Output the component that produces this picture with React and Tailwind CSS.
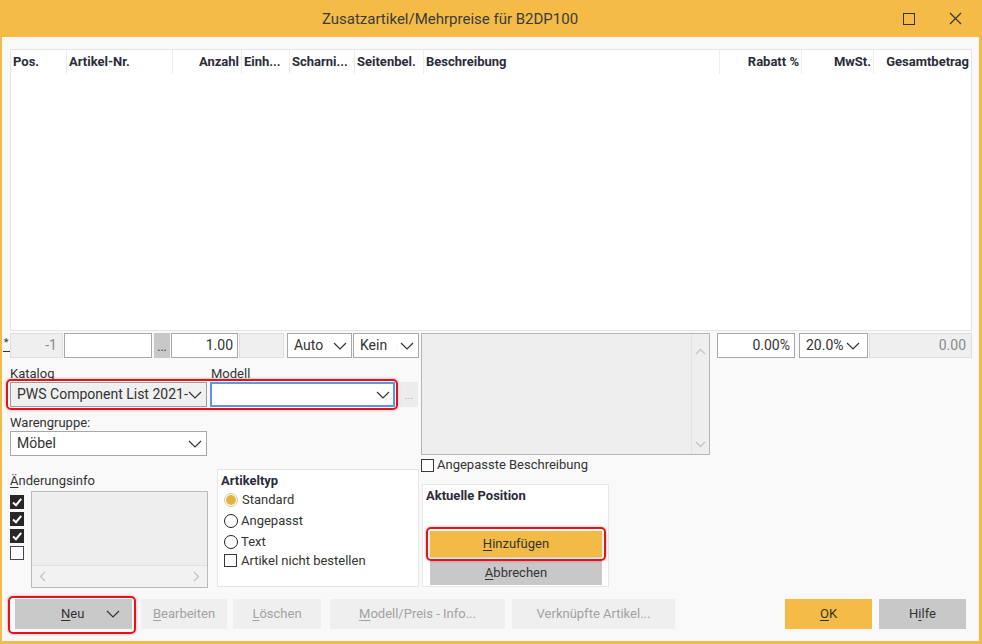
import React from "react";

const Chevron = ({ color = "#333" }) => (
  <svg width="14" height="8" viewBox="0 0 14 8" className="shrink-0">
    <path d="M1 1 L7 7 L13 1" stroke={color} strokeWidth="1.2" fill="none" />
  </svg>
);

const U = ({ children }) => <span className="underline underline-offset-2">{children}</span>;

const cols = [
  { t: "Pos.", w: 56 },
  { t: "Artikel-Nr.", w: 106 },
  { t: "Anzahl", w: 69, r: true },
  { t: "Einh...", w: 48 },
  { t: "Scharni...", w: 65 },
  { t: "Seitenbel.", w: 69 },
  { t: "Beschreibung", w: 296 },
  { t: "Rabatt %", w: 82, r: true },
  { t: "MwSt.", w: 72, r: true },
  { t: "Gesamtbetrag", w: 97, r: true, last: true },
];

function Select({ w, text, bg = "bg-white", border = "border-[#a8a8a8]" }) {
  return (
    <div
      className={`h-[25px] ${bg} border ${border} flex items-center justify-between pl-[6px] pr-[4px] text-[14px] text-[#333] overflow-hidden shrink-0`}
      style={{ width: w }}
    >
      <span className="whitespace-nowrap overflow-hidden">{text}</span>
      <Chevron />
    </div>
  );
}

function DarkCheck() {
  return (
    <div className="w-[14px] h-[14px] bg-[#272727] flex items-center justify-center">
      <svg width="12" height="12" viewBox="0 0 12 12">
        <path d="M2 6.5 L5 9.2 L10.2 2.8" stroke="white" strokeWidth="2" fill="none" />
      </svg>
    </div>
  );
}

export default function App() {
  return (
    <div className="w-[982px] h-[644px] bg-[#f4bc47] flex flex-col font-['Roboto',sans-serif] text-[13px] text-[#333] overflow-hidden">
      {/* Title bar */}
      <div className="h-[37px] flex items-center shrink-0">
        <div className="w-[900px] text-center text-[15px] text-[#3b3b3b] pt-[1px]">
          Zusatzartikel/Mehrpreise für B2DP100
        </div>
        <div className="flex items-center pl-[3px]">
          <div className="w-[12px] h-[12px] border border-[#333]" />
          <svg width="13" height="13" viewBox="0 0 13 13" className="ml-[34px]">
            <path d="M1 1 L12 12 M12 1 L1 12" stroke="#333" strokeWidth="1.1" />
          </svg>
        </div>
      </div>

      {/* Body */}
      <div className="flex-1 ml-[2px] mr-[3px] mb-[3px] bg-[#f9f9f9] pt-[12px] flex flex-col">
        {/* Table */}
        <div className="ml-[8px] w-[962px] h-[282px] bg-white border border-[#e4e4e4]">
          <div className="flex h-[24px]">
            {cols.map((c) => (
              <div
                key={c.t}
                className={`h-full flex items-center px-[2px] font-bold text-[13px] text-[#2c2c3a] whitespace-nowrap overflow-hidden ${c.r ? "justify-end" : ""} ${c.last ? "" : "border-r border-[#ececec]"}`}
                style={{ width: c.w }}
              >
                {c.t}
              </div>
            ))}
          </div>
        </div>

        {/* Upper form area */}
        <div className="flex mt-[2px]">
          {/* Left column */}
          <div className="w-[417px] flex flex-col shrink-0">
            {/* input row */}
            <div className="flex h-[25px] items-start">
              <div className="w-[8px] h-[25px] flex flex-col items-center pt-[4px]">
                <span className="text-[11px] leading-[11px] text-[#333]">*</span>
                <div className="w-[7px] border-b border-[#333] mt-[3px]" />
              </div>
              <div className="w-[53px] h-[25px] bg-[#efefef] border border-[#dedede] flex items-center justify-end pr-[5px] text-[14px] text-[#8a8a8a]">-1</div>
              <div className="ml-[1px] w-[88px] h-[25px] bg-white border border-[#a8a8a8]" />
              <div className="ml-[2px] w-[16px] h-[25px] bg-[#c8c8c8] flex items-end justify-center pb-[5px] text-[12px] leading-none text-[#333]">...</div>
              <div className="ml-[1px] w-[67px] h-[25px] bg-white border border-[#a8a8a8] flex items-center justify-end pr-[4px] text-[14px]">1.00</div>
              <div className="ml-[1px] w-[45px] h-[25px] bg-[#efefef] border border-[#dedede]" />
              <div className="ml-[3px]"><Select w={65} text="Auto" /></div>
              <div className="ml-[1px]"><Select w={66} text="Kein" /></div>
            </div>

            {/* Katalog / Modell */}
            <div className="flex mt-[8px] pl-[8px] h-[16px] items-center text-[13px]">
              <span className="w-[201px]">Katalog</span>
              <span>Modell</span>
            </div>
            <div className="flex pl-[8px] mt-[0px] items-center">
              <div className="relative flex">
                <div className="absolute -left-[4px] -top-[3px] -right-[3px] -bottom-[3px] border-2 border-[#e3131d] rounded-[5px] shadow-[0_0_3px_rgba(227,19,29,0.45)] pointer-events-none" />
                <Select w={197} text="PWS Component List 2021-2" bg="bg-[#f0f0f0]" border="border-[#9c9c9c]" />
                <div className="ml-[3px] w-[185px] h-[25px] bg-white border-2 border-[#5f96e3] flex items-center justify-end pr-[3px]">
                  <Chevron />
                </div>
              </div>
              <div className="ml-[5px] w-[18px] h-[25px] bg-[#ececec] flex items-end justify-center pb-[6px] text-[11px] leading-none text-[#b0b0b0]">...</div>
            </div>

            {/* Warengruppe */}
            <div className="mt-[8px] pl-[8px] h-[16px] flex items-center">Warengruppe:</div>
            <div className="pl-[8px]">
              <Select w={197} text="Möbel" />
            </div>

            {/* groups row */}
            <div className="flex mt-[13px] pl-[8px]">
              {/* Änderungsinfo */}
              <div className="w-[198px] flex flex-col">
                <div className="h-[16px] mt-[4px] flex items-center"><U>Ä</U>nderungsinfo</div>
                <div className="flex mt-[2px]">
                  <div className="flex flex-col gap-[3px] pt-[4px]">
                    <DarkCheck />
                    <DarkCheck />
                    <DarkCheck />
                    <div className="w-[14px] h-[14px] bg-white border border-[#4a3f55]" />
                  </div>
                  <div className="ml-[7px] w-[177px] h-[97px] bg-[#eeeeee] border border-[#b9b9b9] flex flex-col">
                    <div className="flex-1" />
                    <div className="h-[22px] bg-[#f2f2f2] border-t border-[#e2e2e2] flex items-center justify-between px-[7px]">
                      <svg width="7" height="11" viewBox="0 0 7 11"><path d="M6 1 L1.5 5.5 L6 10" stroke="#c4c4c4" strokeWidth="1.3" fill="none" /></svg>
                      <svg width="7" height="11" viewBox="0 0 7 11"><path d="M1 1 L5.5 5.5 L1 10" stroke="#c4c4c4" strokeWidth="1.3" fill="none" /></svg>
                    </div>
                  </div>
                </div>
              </div>
              {/* Artikeltyp */}
              <div className="ml-[9px] w-[202px] h-[118px] bg-white border border-[#e6e6e6] flex flex-col">
                <div className="h-[16px] mt-[3px] pl-[3px] flex items-center font-bold text-[#2c2c3a]">Artikeltyp</div>
                <div className="h-[21px] flex items-center pl-[6px] text-[13px]">
                  <div className="w-[14px] h-[14px] rounded-full border border-[#d2c7a8] bg-white flex items-center justify-center">
                    <div className="w-[10px] h-[10px] rounded-full bg-[#e5b23f]" />
                  </div>
                  <span className="ml-[4px]">Standard</span>
                </div>
                <div className="h-[21px] flex items-center pl-[6px]">
                  <div className="w-[14px] h-[14px] rounded-full border border-[#222] bg-white" />
                  <span className="ml-[3px]">Angepasst</span>
                </div>
                <div className="h-[21px] flex items-center pl-[6px]">
                  <div className="w-[14px] h-[14px] rounded-full border border-[#222] bg-white" />
                  <span className="ml-[3px]">Text</span>
                </div>
                <div className="h-[17px] flex items-center pl-[6px]">
                  <div className="w-[13px] h-[13px] border border-[#3d3246] bg-white" />
                  <span className="ml-[4px]">Artikel nicht bestellen</span>
                </div>
              </div>
            </div>
          </div>

          {/* Middle column */}
          <div className="ml-[2px] w-[291px] flex flex-col shrink-0">
            <div className="w-[289px] h-[122px] bg-[#eeeeee] border border-[#b5b5b5] flex justify-end">
              <div className="w-[18px] border-l border-[#e2e2e2] flex flex-col items-center justify-between pt-[14px] pb-[6px]">
                <svg width="11" height="7" viewBox="0 0 11 7"><path d="M1 6 L5.5 1.5 L10 6" stroke="#c4c4c4" strokeWidth="1.3" fill="none" /></svg>
                <svg width="11" height="7" viewBox="0 0 11 7"><path d="M1 1 L5.5 5.5 L10 1" stroke="#c4c4c4" strokeWidth="1.3" fill="none" /></svg>
              </div>
            </div>
            <div className="h-[16px] mt-[2px] flex items-center">
              <div className="w-[13px] h-[13px] border border-[#3d3246] bg-white" />
              <span className="ml-[3px]">Angepasste Beschreibung</span>
            </div>
            <div className="ml-[1px] mt-[11px] w-[187px] h-[103px] bg-white border border-[#e6e6e6] flex flex-col">
              <div className="h-[16px] mt-[3px] pl-[3px] flex items-center font-bold text-[#2c2c3a]">Aktuelle Position</div>
              <div className="relative ml-[7px] mt-[27px] w-[172px]">
                <div className="absolute -left-[4px] -top-[4px] -right-[4px] -bottom-[4px] border-2 border-[#e3131d] rounded-[5px] shadow-[0_0_3px_rgba(227,19,29,0.45)] pointer-events-none" />
                <div className="h-[26px] bg-[#f2bb45] shadow-[0_1px_2px_rgba(0,0,0,0.25)] flex items-center justify-center text-[13px] text-[#333]">
                  <span><U>H</U>inzufügen</span>
                </div>
              </div>
              <div className="ml-[7px] mt-[4px] w-[172px] h-[24px] bg-[#c8c8c8] flex items-center justify-center">
                <span><U>A</U>bbrechen</span>
              </div>
            </div>
          </div>

          {/* Right column */}
          <div className="ml-[5px] flex h-[25px]">
            <div className="w-[78px] h-[25px] bg-white border border-[#a8a8a8] flex items-center justify-end pr-[4px] text-[14px]">0.00%</div>
            <div className="ml-[4px]">
              <div className="w-[69px] h-[25px] bg-white border border-[#a8a8a8] flex items-center pl-[6px] pr-[4px] gap-[2px] text-[14px]">
                <span>20.0%</span>
                <Chevron />
              </div>
            </div>
            <div className="ml-[1px] w-[103px] h-[25px] bg-[#efefef] border border-[#dedede] flex items-center justify-end pr-[5px] text-[14px] text-[#8a8a8a]">0.00</div>
          </div>
        </div>

        {/* Bottom buttons */}
        <div className="flex mt-[11px] h-[30px] items-start">
          <div className="relative ml-[13px] w-[117px] h-[30px]">
            <div className="absolute -left-[7px] -top-[3px] -right-[4px] -bottom-[5px] border-2 border-[#e3131d] rounded-[5px] shadow-[0_0_3px_rgba(227,19,29,0.45)] pointer-events-none" />
            <div className="w-full h-full bg-[#c9c9c9] flex items-center">
              <span className="ml-[46px]"><U>N</U>eu</span>
              <span className="ml-[22px]"><Chevron /></span>
            </div>
          </div>
          <div className="ml-[9px] w-[86px] h-[30px] bg-[#efefef] text-[#a2a2a2] flex items-center justify-center"><span><U>B</U>earbeiten</span></div>
          <div className="ml-[6px] w-[88px] h-[30px] bg-[#efefef] text-[#a2a2a2] flex items-center justify-center"><span><U>L</U>öschen</span></div>
          <div className="ml-[9px] w-[175px] h-[30px] bg-[#efefef] text-[#a2a2a2] flex items-center justify-center"><span><U>M</U>odell/Preis - Info...</span></div>
          <div className="ml-[7px] w-[163px] h-[30px] bg-[#efefef] text-[#a2a2a2] flex items-center justify-center">Verknüpfte Artikel...</div>
          <div className="ml-[110px] w-[87px] h-[30px] bg-[#f4bc47] flex items-center justify-center"><span><U>O</U>K</span></div>
          <div className="ml-[7px] w-[87px] h-[30px] bg-[#c8c8c8] flex items-center justify-center"><span>H<U>i</U>lfe</span></div>
        </div>
      </div>
    </div>
  );
}
